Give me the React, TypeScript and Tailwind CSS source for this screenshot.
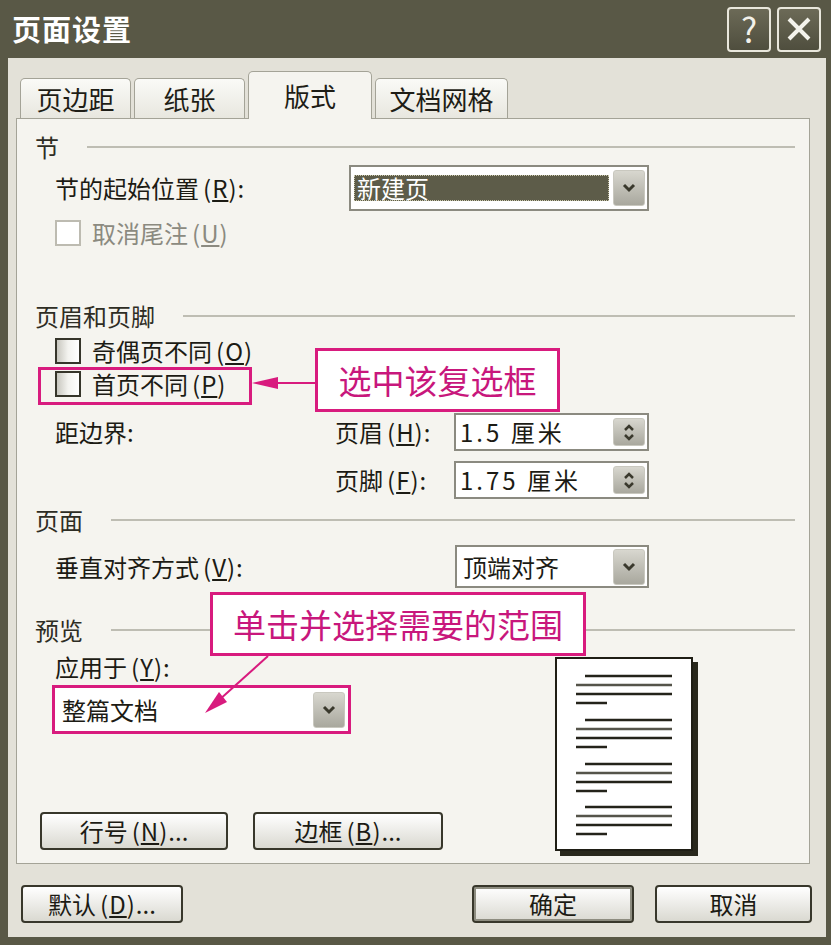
import React from "react";

const font = "font-['Noto_Sans_CJK_SC',sans-serif]";

function Chevron() {
  return (
    <svg width="14" height="10" viewBox="0 0 14 10">
      <path d="M2 2 L7 7 L12 2" fill="none" stroke="#3a392d" strokeWidth="3" />
    </svg>
  );
}

function DropButton({ h = 36 }: { h?: number }) {
  return (
    <div
      className="flex w-[32px] items-center justify-center rounded-[3px] border border-[#c9c8bf] bg-gradient-to-b from-[#d8d7cf] to-[#a9a89e]"
      style={{ height: h }}
    >
      <Chevron />
    </div>
  );
}

function SpinButton() {
  return (
    <div className="flex h-[28px] w-[32px] flex-col items-center justify-center gap-[3px] rounded-[3px] border border-[#c9c8bf] bg-gradient-to-b from-[#d8d7cf] to-[#a9a89e]">
      <svg width="12" height="7" viewBox="0 0 12 7">
        <path d="M2 6 L6 2 L10 6" fill="none" stroke="#3a392d" strokeWidth="2.5" />
      </svg>
      <svg width="12" height="7" viewBox="0 0 12 7">
        <path d="M2 1 L6 5 L10 1" fill="none" stroke="#3a392d" strokeWidth="2.5" />
      </svg>
    </div>
  );
}

function Checkbox({ disabled }: { disabled?: boolean }) {
  if (disabled) return <div className="h-[26px] w-[26px] border-2 border-[#bdbbb1] bg-white" />;
  return (
    <div className="h-[26px] w-[26px] border-2 border-[#36352a] bg-gradient-to-r from-[#c8c7bf] via-[#f3f3ef] to-white" />
  );
}

function Key({ k }: { k: string }) {
  return (
    <span className="ml-[4px] tracking-[1px]">
      (<span className="underline underline-offset-2">{k}</span>)
    </span>
  );
}

function Section({ label, mt }: { label: string; mt: number }) {
  return (
    <div className="flex h-[24px] items-center pl-[18px] pr-[14px]" style={{ marginTop: mt }}>
      <span className="text-[24px] leading-none text-[#2e2d24]">{label}</span>
      <div className="ml-[28px] h-[2px] flex-1 bg-[#bebdb3]" />
    </div>
  );
}

function Tab({ label, w, active }: { label: string; w: number; active?: boolean }) {
  return (
    <div
      className={
        active
          ? "relative z-10 -mb-[1px] flex h-[48px] items-center justify-center rounded-t-[5px] border border-b-0 border-[#a4a397] bg-[#f5f4ef] text-[26px] text-[#1e1d16]"
          : "flex h-[40px] items-center justify-center rounded-t-[5px] border border-b-0 border-[#a4a397] bg-gradient-to-b from-[#fafaf7] to-[#e8e7df] text-[26px] text-[#1e1d16]"
      }
      style={{ width: w }}
    >
      {label}
    </div>
  );
}

function Btn({ children, w, def }: { children: React.ReactNode; w: number; def?: boolean }) {
  return (
    <div
      className={
        "flex h-[38px] items-center justify-center rounded-[4px] border-2 border-[#38372b] bg-gradient-to-b from-white to-[#dad9d1] text-[24px] leading-none text-[#1c1b14] " +
        (def ? "shadow-[inset_0_0_0_2px_#8e8d80]" : "")
      }
      style={{ width: w }}
    >
      {children}
    </div>
  );
}

function PreviewPage() {
  const groups = [17, 61, 105, 148];
  return (
    <div className="relative h-[194px] w-[138px] border-2 border-[#1f1e15] bg-white shadow-[5px_5px_0_#29281c]">
      <svg width="134" height="190" className="absolute left-0 top-0">
        {groups.map((y) => (
          <g key={y} stroke="#24231a" strokeWidth="2.5">
            <line x1="28" y1={y} x2="115" y2={y} />
            <line x1="19" y1={y + 9} x2="115" y2={y + 9} stroke="#55544a" />
            <line x1="19" y1={y + 18} x2="115" y2={y + 18} />
            <line x1="19" y1={y + 27} x2="50" y2={y + 27} />
          </g>
        ))}
      </svg>
    </div>
  );
}

export default function App() {
  return (
    <div className={`relative h-[945px] w-[831px] overflow-hidden bg-[#595846] ${font}`}>
      {/* title bar */}
      <div className="flex h-[58px] items-center justify-between pl-[12px] pr-[10px]">
        <span className="text-[29px] font-bold tracking-[1px] text-white">页面设置</span>
        <div className="flex gap-[6px]">
          <div className="flex h-[45px] w-[44px] items-center justify-center rounded-[4px] border-2 border-[#e9e7dc] bg-gradient-to-b from-[#6c6a57] to-[#4f4e3e] text-[34px] leading-none text-[#f2f1ea]">
            ?
          </div>
          <div className="flex h-[45px] w-[44px] items-center justify-center rounded-[4px] border-2 border-[#e9e7dc] bg-gradient-to-b from-[#6c6a57] to-[#4f4e3e]">
            <svg width="26" height="26" viewBox="0 0 26 26">
              <path d="M3 3 L23 23 M23 3 L3 23" stroke="#f4f3ec" strokeWidth="4" />
            </svg>
          </div>
        </div>
      </div>

      {/* body */}
      <div className="ml-[8px] mr-[5px] flex h-[879px] flex-col bg-[#e3e1d8]">
        <div className="ml-[12px] mt-[14px] flex h-[46px] items-end gap-[3px]">
          <Tab label="页边距" w={111} />
          <Tab label="纸张" w={111} />
          <Tab label="版式" w={124} active />
          <Tab label="文档网格" w={133} />
        </div>

        <div className="ml-[8px] flex h-[746px] w-[794px] flex-col border border-[#a4a397] bg-[#f5f4ef] text-[24px] leading-none text-[#1c1b14]">
          <Section label="节" mt={16} />

          <div className="mt-[6px] flex h-[46px] items-center pl-[38px]">
            <div className="w-[294px]">
              节的起始位置<Key k="R" />:
            </div>
            <div className="flex h-[46px] w-[300px] items-center border-2 border-[#8b8a80] bg-white pl-[3px] pr-[2px]">
              <div className="flex h-[26px] flex-1 items-center border border-dotted border-[#c9c6aa] bg-[#5d5c49] pl-[2px] text-white">
                新建页
              </div>
              <div className="ml-[4px]">
                <DropButton />
              </div>
            </div>
          </div>

          <div className="mt-[9px] flex h-[26px] items-center pl-[38px] text-[#8b8a80]">
            <Checkbox disabled />
            <span className="ml-[11px]">
              取消尾注<Key k="U" />
            </span>
          </div>

          <Section label="页眉和页脚" mt={58} />

          <div className="mt-[10px] flex h-[26px] items-center pl-[38px]">
            <Checkbox />
            <span className="ml-[11px]">
              奇偶页不同<Key k="O" />
            </span>
          </div>
          <div className="mt-[7px] flex h-[26px] items-center pl-[38px]">
            <Checkbox />
            <span className="ml-[11px]">
              首页不同<Key k="P" />
            </span>
          </div>

          <div className="mt-[16px] flex h-[38px] items-center pl-[38px]">
            <div className="w-[280px]">距边界:</div>
            <div className="w-[119px]">
              页眉<Key k="H" />:
            </div>
            <div className="flex h-[38px] w-[195px] items-center justify-between border-2 border-[#8b8a80] bg-white pl-[4px] pr-[2px]">
              <span className="tracking-[3px]">1.5 厘米</span>
              <SpinButton />
            </div>
          </div>
          <div className="mt-[10px] flex h-[38px] items-center pl-[318px]">
            <div className="w-[119px]">
              页脚<Key k="F" />:
            </div>
            <div className="flex h-[38px] w-[195px] items-center justify-between border-2 border-[#8b8a80] bg-white pl-[4px] pr-[2px]">
              <span className="tracking-[3px]">1.75 厘米</span>
              <SpinButton />
            </div>
          </div>

          <Section label="页面" mt={9} />

          <div className="mt-[13px] flex h-[43px] items-center pl-[38px]">
            <div className="w-[400px]">
              垂直对齐方式<Key k="V" />:
            </div>
            <div className="flex h-[43px] w-[194px] items-center justify-between border-2 border-[#8b8a80] bg-white pl-[6px] pr-[2px]">
              <span>顶端对齐</span>
              <DropButton />
            </div>
          </div>

          <Section label="预览" mt={30} />

          <div className="mt-[13px] flex">
            <div className="flex w-[538px] flex-col">
              <div className="ml-[38px] flex h-[24px] items-center">
                应用于<Key k="Y" />:
              </div>
              <div className="ml-[35px] mt-[6px] flex h-[49px] w-[299px] items-center justify-between border-[3px] border-[#d81b7e] bg-white pl-[7px] pr-[3px]">
                <span>整篇文档</span>
                <DropButton />
              </div>
              <div className="ml-[23px] mt-[78px] flex gap-[25px]">
                <Btn w={188}>
                  行号<Key k="N" />...
                </Btn>
                <Btn w={190}>
                  边框<Key k="B" />...
                </Btn>
              </div>
            </div>
            <div className="mt-[2px]">
              <PreviewPage />
            </div>
          </div>
        </div>

        <div className="mt-[21px] flex pl-[13px] pr-[14px]">
          <Btn w={162}>
            默认<Key k="D" />...
          </Btn>
          <div className="ml-auto flex gap-[21px]">
            <Btn w={162} def>
              确定
            </Btn>
            <Btn w={157}>取消</Btn>
          </div>
        </div>
      </div>

      {/* annotations */}
      <div className="absolute left-[38px] top-[367px] h-[38px] w-[214px] border-[3px] border-[#d81b7e]" />
      <div className="absolute left-[315px] top-[348px] flex h-[64px] w-[245px] items-center justify-center border-[3px] border-[#d81b7e] bg-white text-[33px] leading-none text-[#c8177c]">
        选中该复选框
      </div>
      <div className="absolute left-[210px] top-[592px] flex h-[64px] w-[376px] items-center justify-center border-[3px] border-[#d81b7e] bg-white text-[33px] leading-none text-[#c8177c]">
        单击并选择需要的范围
      </div>
      <svg className="pointer-events-none absolute left-0 top-0" width="831" height="945">
        <line x1="315" y1="383" x2="272" y2="383" stroke="#d81b7e" strokeWidth="2" />
        <polygon points="252,383 278,377 278,389" fill="#d81b7e" />
        <line x1="268" y1="656" x2="218" y2="701" stroke="#d81b7e" strokeWidth="2" />
        <polygon points="205,713 227,702 219,692" fill="#d81b7e" />
      </svg>
    </div>
  );
}
